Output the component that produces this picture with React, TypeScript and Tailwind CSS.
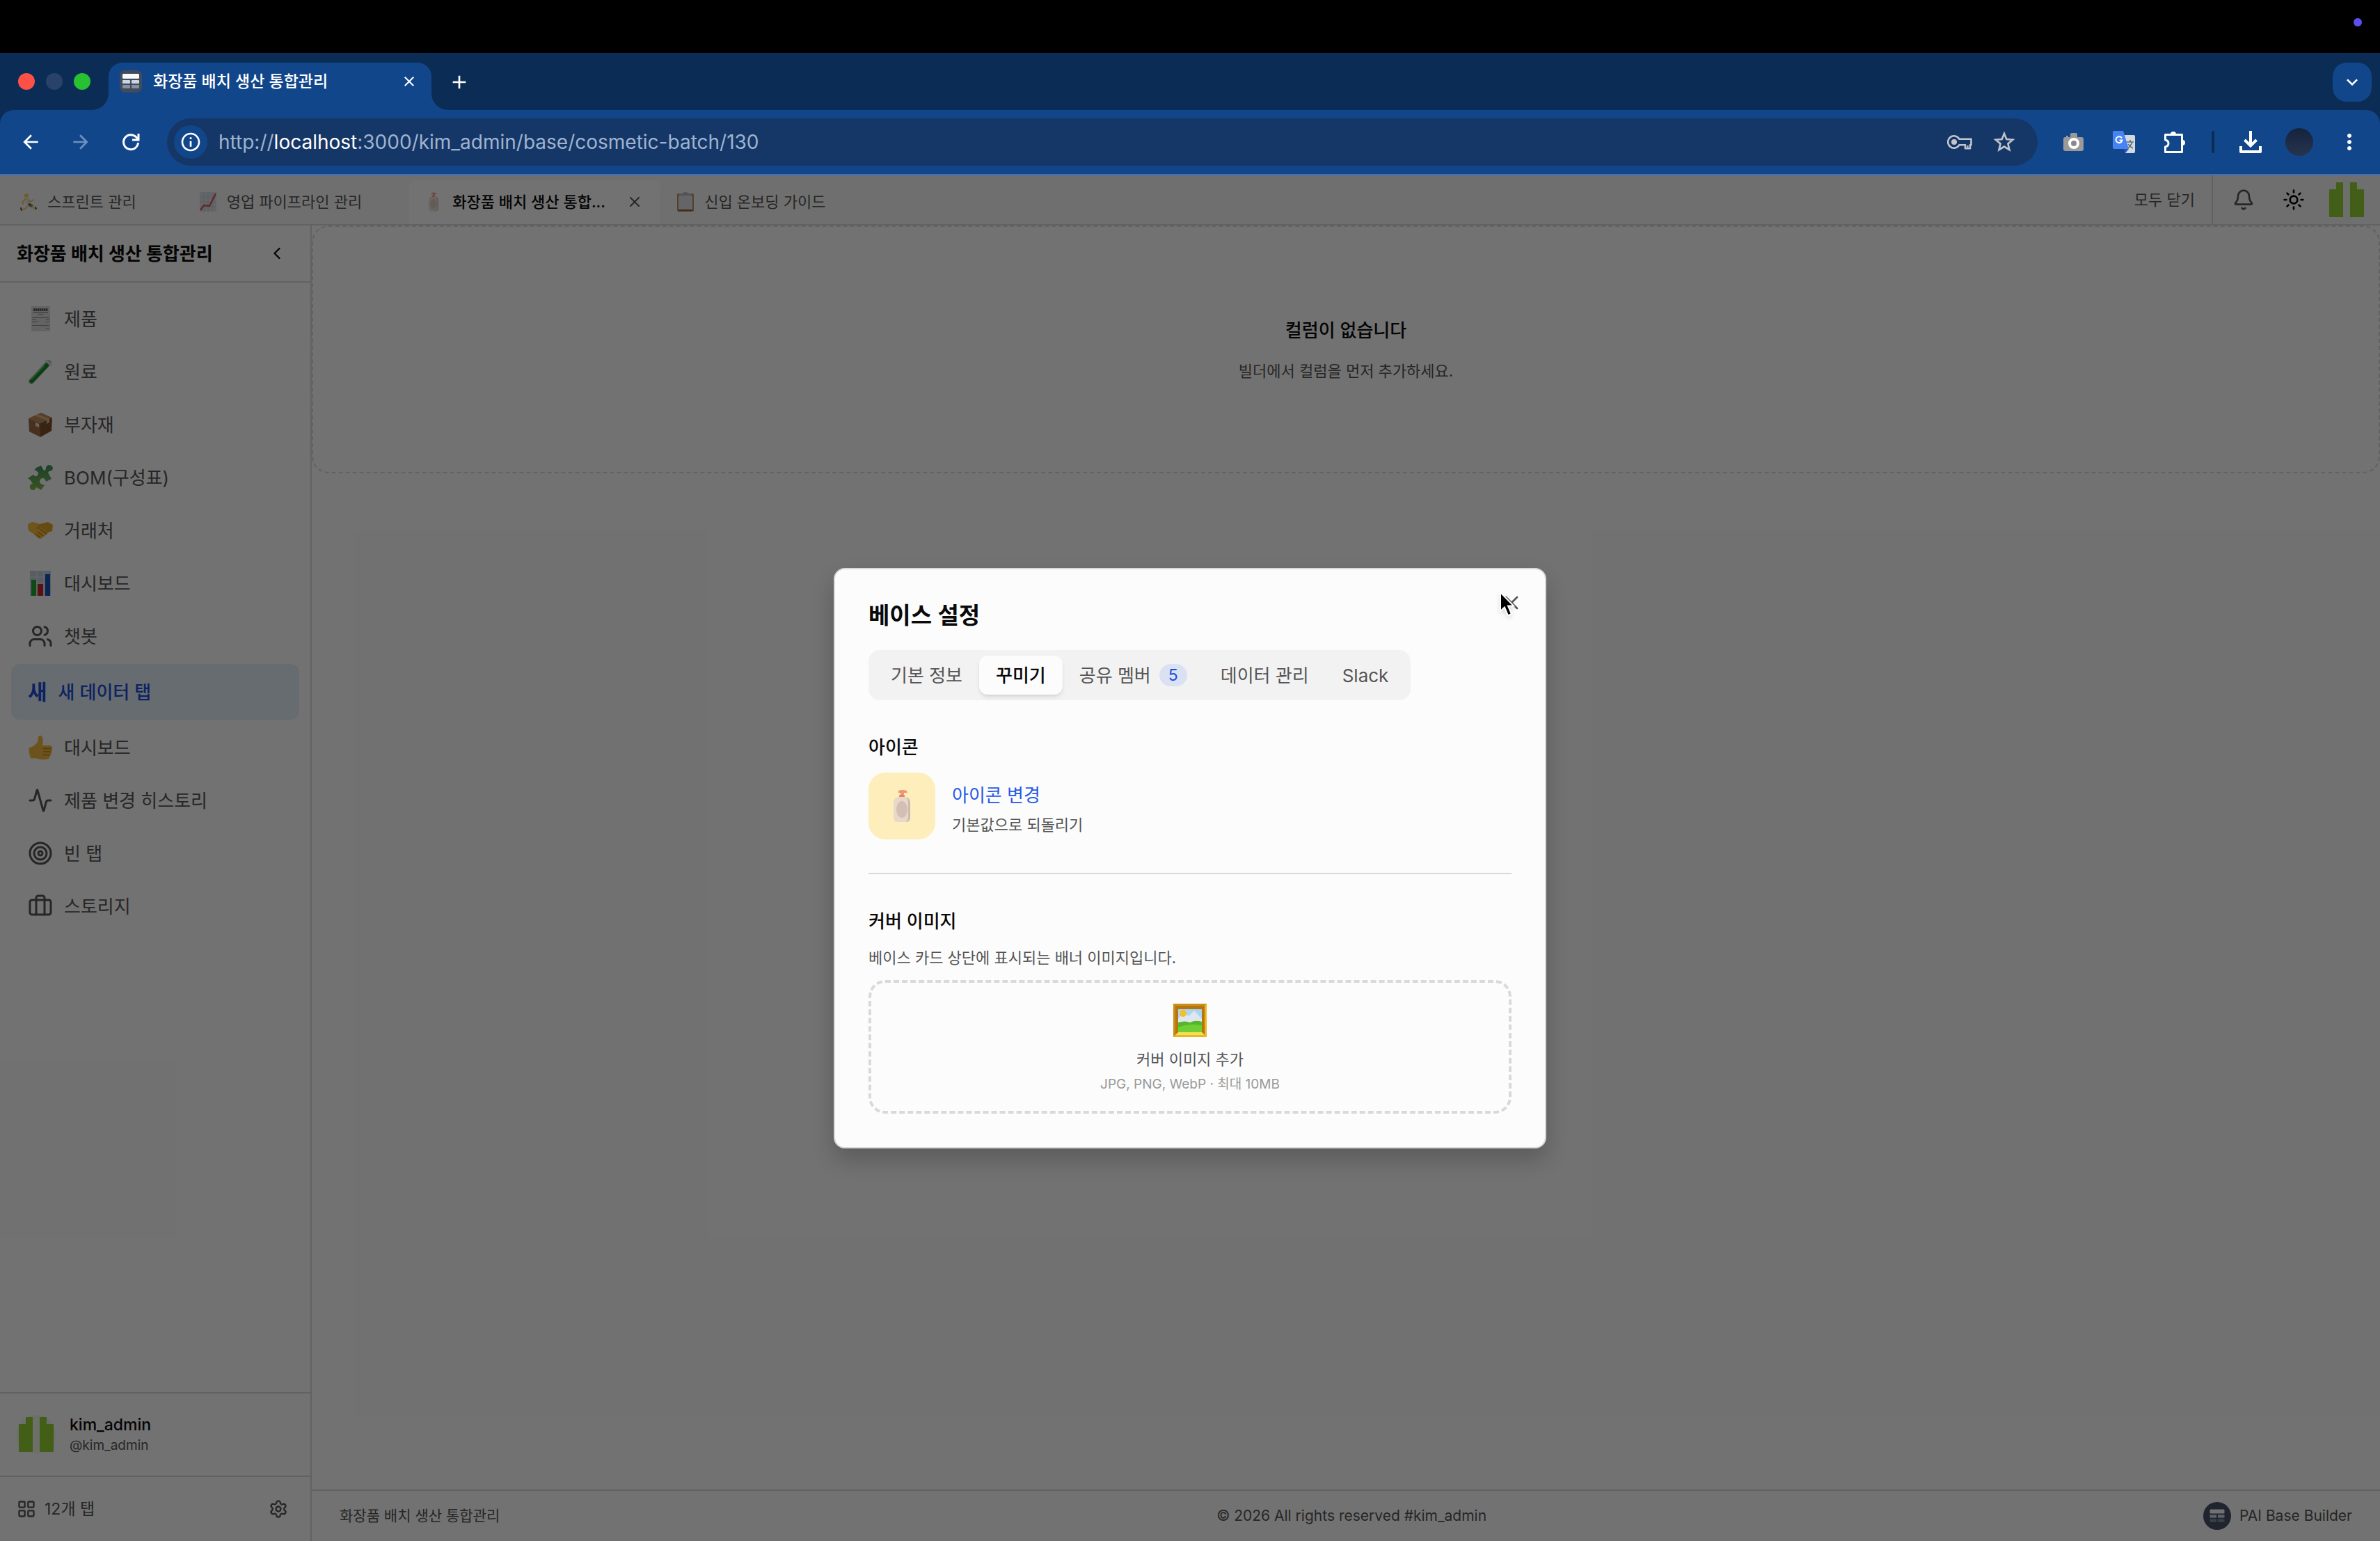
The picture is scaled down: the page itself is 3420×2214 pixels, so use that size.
import { ReactNode, useState } from "react";
import { Activity, Bell, Briefcase, ChevronLeft, LayoutGrid, Settings, Sun, Target, Users, X } from "lucide-react";
import { MdAdd, MdArrowBack, MdArrowForward, MdClose, MdInfoOutline, MdKeyboardArrowDown, MdMoreVert } from "react-icons/md";

interface BaseTab {
    emoji: ReactNode,
    label: string
}

interface SidebarItem {
    icon: ReactNode,
    label: string,
    active?: boolean
}

const AppLogo = ({ className }: { className: string }) => (
    <svg viewBox="0 0 32 32" className={className}>
        <rect x="4" y="5" width="24" height="7" rx="1.5" fill="#f8fafc" />
        <rect x="4" y="14" width="11" height="5" rx="1" fill="#cbd5e1" />
        <rect x="17" y="14" width="11" height="5" rx="1" fill="#cbd5e1" />
        <rect x="4" y="21" width="11" height="5" rx="1" fill="#8590a3" />
        <rect x="17" y="21" width="11" height="5" rx="1" fill="#8590a3" />
    </svg>
)

const Identicon = ({ className }: { className: string }) => (
    <svg viewBox="0 0 56 56" className={className}>
        <circle cx="28" cy="28" r="28" fill="#f1f7ea" />
        <path d="M3 13h10V3h10v50H3zM33 3h10v10h10v40H33z" fill="#93d133" />
    </svg>
)

const RunnerEmoji = ({ className }: { className: string }) => (
    <svg viewBox="0 0 28 28" className={className} fill="none" strokeLinecap="round" strokeLinejoin="round">
        <circle cx="11" cy="5" r="3" fill="#fbc02d" />
        <path d="M10 10l6 8" stroke="#dfe6ee" strokeWidth="6" />
        <path d="M10 10l-4 3v4M14 11l3 3 4-3" stroke="#fbc02d" strokeWidth="2" />
        <path d="M15 18l4 2" stroke="#37474f" strokeWidth="4" />
        <path d="M14 19l-5 5-4 1M19 20l3 4 3-1" stroke="#fbc02d" strokeWidth="2" />
        <path d="M3 23l1 3M24 22l1 2" stroke="#1f2a5a" strokeWidth="2" />
    </svg>
)

const ChartUpEmoji = ({ className }: { className: string }) => (
    <svg viewBox="0 0 28 28" className={className} fill="none">
        <rect x="2" y="0" width="24" height="28" fill="#d5dce4" />
        <path d="M8 0v28M14 0v28M20 0v28M2 7h24M2 14h24M2 21h24" stroke="#bcc8d4" />
        <path d="M3 26l5-7 8 1 9-18" stroke="#d32f2f" strokeWidth="2.4" />
    </svg>
)

const LotionEmoji = ({ className }: { className: string }) => (
    <svg viewBox="0 0 28 48" className={className}>
        <path d="M9 2q5-2 12 0l1 3h-5v4h-5V5H9z" fill="#ee9676" />
        <rect x="10" y="8" width="8" height="4" rx="1" fill="#e8845f" />
        <path d="M8 11h12q6 2 6 9v19q0 8-6 8H8q-6 0-6-8V20q0-7 6-9z" fill="#e8d8ca" />
        <path d="M20 11q6 2 6 9v19q0 8-6 8 3-3 3-9V20q0-7-3-9z" fill="#cfbbad" />
        <ellipse cx="14" cy="29" rx="8" ry="12" fill="#d3bfb3" />
    </svg>
)

const ClipboardEmoji = ({ className }: { className: string }) => (
    <svg viewBox="0 0 28 28" className={className}>
        <rect x="2" y="2" width="24" height="26" rx="2" fill="#a5743a" />
        <rect x="4" y="5" width="20" height="20" fill="#dcdce0" />
        <path d="M4 25h20v2H4z" fill="#6b3d16" />
        <path d="M5 2h5q0-2 4-2t4 2h5v3H5z" fill="#a7abb0" />
    </svg>
)

const ReceiptEmoji = () => (
    <svg viewBox="0 0 36 36" className="size-9">
        <path d="M5 0h27v36H5z" fill="#dcdcdc" />
        <path d="M8 5h21" stroke="#555" strokeWidth="3.5" strokeDasharray="2.500 0.500" />
        <path d="M8 8.500h21" stroke="#777" />
        <path d="M15 11.500h7M6 16.500h25M6 22.500h9M26 22.500h5M6 27.500h25M26 31.500h5M6 19.500h6M26 19.500h5" stroke="#8c8c8c" />
    </svg>
)

const TestTubeEmoji = () => (
    <svg viewBox="0 0 36 36" className="size-9" strokeLinecap="round">
        <path d="M5 32L30 5" stroke="#b4c2bc" strokeWidth="8" />
        <path d="M5.500 31.500L27 9" stroke="#168a2f" strokeWidth="6" />
        <path d="M5 29L23 10" stroke="#57c46a" strokeWidth="1.5" />
        <path d="M26 2l8 7" stroke="#dbe4e0" strokeWidth="2.5" />
    </svg>
)

const PackageEmoji = () => (
    <svg viewBox="0 0 36 36" className="size-9">
        <path d="M1 9L19 1l16 7-17 8z" fill="#c08a5a" />
        <path d="M1 9l17 7v20L2 28z" fill="#a36b3f" />
        <path d="M35 8l-17 8v20l16-9z" fill="#7e4e2b" />
        <path d="M10 5l17 7v5l4-2v-5L14 3z" fill="#d8b48c" />
        <path d="M11 15l5 2v5l-5-2z" fill="#dedede" />
    </svg>
)

const PuzzleEmoji = () => (
    <svg viewBox="0 0 36 36" className="size-9">
        <defs>
            <linearGradient id="puzzle" x1="0" y1="0" x2="0" y2="1">
                <stop offset="0" stopColor="#3f8f5f" />
                <stop offset="1" stopColor="#83b84a" />
            </linearGradient>
        </defs>
        <path
            d="M12 4l7-3 4 7q3 0 3-4 1-4 5-4 5 1 5 5-1 4-5 4-3 1-1 4l4 7-8 4q-1-5-5-5-4 1-4 5 1 4 4 4l3 1-5 7-7-4q-2 5-5 4-5-1-4-5 0-4 4-4-2-3-3-5L0 19l8-5q3 4 6 1 2-3 0-5-2-3-5-2z"
            fill="url(#puzzle)"
        />
    </svg>
)

const HandshakeEmoji = () => (
    <svg viewBox="0 0 36 36" className="size-9">
        <path d="M0 9l7-3 10 3 12-3 7 4-1 9-6 2-7 6q-3 4-7 2l-8-7-6-4z" fill="#e2a528" />
        <path d="M17 9l-6 6q3 3 8-1l10 8-6 5-8 2-9-8-5-4L0 9l7-3z" fill="#f3bd3c" />
        <path d="M17 16l10 7M14 20l8 6M11 23l7 5" stroke="#b27812" strokeWidth="1.2" fill="none" />
    </svg>
)

const BarChartEmoji = () => (
    <svg viewBox="0 0 36 36" className="size-9">
        <path d="M3 0h30v36H3z" fill="#c3cddb" />
        <path d="M13 0v36M23 0v36M3 9h30M3 18h30M3 27h30" stroke="#e4eaf2" />
        <path d="M5 13h7v23H5z" fill="#1fa52e" />
        <path d="M14 19h8v17h-8z" fill="#c62828" />
        <path d="M25 5h7v31h-7z" fill="#1456b8" />
    </svg>
)

const ThumbsUpEmoji = () => (
    <svg viewBox="0 0 36 36" className="size-9">
        <path d="M2 18q7-1 12-8 1-4 1-7 1-3 4-2 4 2 2 14l9 0q6 0 5 4 1 3-1 4 1 3-1 4 0 3-2 4 0 4-5 4-9 1-15-2-4 1-7 0-3-7-2-15z" fill="#f0b93c" />
        <path d="M22 19.500h11M22 24h11M22 28.500h10" stroke="#bf8317" strokeWidth="1.3" />
    </svg>
)

const FrameEmoji = () => (
    <svg viewBox="0 0 48 48" className="size-12">
        <path d="M0 0h48v48H0z" fill="#e8b923" />
        <path d="M0 0h48l-5 5H5v38l-5 5z" fill="#c98f17" />
        <path d="M3 3h42v42H3z" fill="#b8740f" />
        <path d="M3 45l4-4h34l4 4z" fill="#f7dc55" />
        <path d="M7 8h34v33H7z" fill="#a9d7f2" />
        <path d="M7 22l8-9 7 5 8-8 11 12v8H7z" fill="#dfe6ee" />
        <circle cx="14" cy="14" r="5" fill="#f5bf2c" />
        <path d="M7 27q10-3 17 0 8-4 17-1v15H7z" fill="#57b52c" />
        <path d="M7 34q14-6 34-3v10H7z" fill="#6fce33" />
    </svg>
)

const BASE_TABS: BaseTab[] = [
    { emoji: <RunnerEmoji className="size-7" />, label: "스프린트 관리" },
    { emoji: <ChartUpEmoji className="size-7" />, label: "영업 파이프라인 관리" },
    { emoji: <LotionEmoji className="size-7" />, label: "화장품 배치 생산 통합..." },
    { emoji: <ClipboardEmoji className="size-7" />, label: "신입 온보딩 가이드" }
]

const SIDEBAR_ITEMS: SidebarItem[] = [
    { icon: <ReceiptEmoji />, label: "제품" },
    { icon: <TestTubeEmoji />, label: "원료" },
    { icon: <PackageEmoji />, label: "부자재" },
    { icon: <PuzzleEmoji />, label: "BOM(구성표)" },
    { icon: <HandshakeEmoji />, label: "거래처" },
    { icon: <BarChartEmoji />, label: "대시보드" },
    { icon: <Users className="size-9" />, label: "챗봇" },
    { icon: <span className="text-[30px] font-bold">새</span>, label: "새 데이터 탭", active: true },
    { icon: <ThumbsUpEmoji />, label: "대시보드" },
    { icon: <Activity className="size-9" />, label: "제품 변경 히스토리" },
    { icon: <Target className="size-9" />, label: "빈 탭" },
    { icon: <Briefcase className="size-9" />, label: "스토리지" }
]

const SETTING_TABS = ["기본 정보", "꾸미기", "공유 멤버", "데이터 관리", "Slack"]

function BrowserChrome(){
    return(
        <div className="bg-[#0b2d55] text-white">
            <div className="flex h-[82px] items-end pl-[26px] pr-3">
                <div className="flex gap-4 pb-[29px] pr-[26px]">
                    <div className="size-6 rounded-full bg-[#fd5147]"></div>
                    <div className="size-6 rounded-full bg-[#28426a]"></div>
                    <div className="size-6 rounded-full bg-[#28c132]"></div>
                </div>
                <div className="relative h-[68px] w-[464px] rounded-t-[20px] bg-[#12468b] flex items-center pl-4 pr-5 pb-3.5">
                    <div className="absolute bottom-0 -left-6 size-6 bg-[#12468b]"><div className="size-6 rounded-br-full bg-[#0b2d55]"></div></div>
                    <div className="absolute bottom-0 -right-6 size-6 bg-[#12468b]"><div className="size-6 rounded-bl-full bg-[#0b2d55]"></div></div>
                    <AppLogo className="size-8 rounded-lg bg-[#414b5c]" />
                    <div className="flex-1 pl-4 text-[23px] font-medium">화장품 배치 생산 통합관리</div>
                    <button aria-label="탭 닫기"><MdClose className="size-6" /></button>
                </div>
                <button aria-label="새 탭" className="pb-6 pl-6"><MdAdd className="size-8" /></button>
                <button aria-label="탭 검색" className="mb-3 ml-auto size-14 rounded-[20px] bg-[#12468b] flex items-center justify-center">
                    <MdKeyboardArrowDown className="size-8" />
                </button>
            </div>
            <div className="flex h-[94px] items-center rounded-t-[20px] border-b-2 border-[#3f70b0] bg-[#12468b] pl-7 pr-[26px]">
                <div className="flex gap-10 pr-9">
                    <button aria-label="뒤로"><MdArrowBack className="size-8" /></button>
                    <button aria-label="앞으로" className="text-[#6f90bd]"><MdArrowForward className="size-8" /></button>
                    <button aria-label="새로고침">
                        <svg viewBox="0 0 32 32" className="size-8" fill="none" stroke="currentColor" strokeWidth="3">
                            <path d="M26.500 17a10.500 10.500 0 1 1-3-8.200l3 3" />
                            <path d="M27 4v9h-9" />
                        </svg>
                    </button>
                </div>
                <div className="flex h-[68px] flex-1 items-center rounded-full bg-[#153767] pl-2.5 pr-8">
                    <button aria-label="사이트 정보" className="size-12 rounded-full bg-[#12468b] flex items-center justify-center">
                        <MdInfoOutline className="size-8" />
                    </button>
                    <div role="textbox" aria-label="주소창" className="flex-1 pl-4 text-[28px] text-[#9fb3cf]">
                        http://<span className="text-white">localhost</span>:3000/kim_admin/base/cosmetic-batch/130
                    </div>
                    <div className="flex items-center gap-[30px] text-[#c1c5cc]">
                        <button aria-label="비밀번호">
                            <svg viewBox="0 0 36 28" className="h-7 w-9" fill="none" stroke="currentColor" strokeWidth="2.600" strokeLinejoin="round">
                                <path d="M17.500 9.800A8.700 8.700 0 1 0 17.500 18.200H26v5h7v-5h1.500V9.800z" />
                                <path d="M29.500 19v4" strokeWidth="2" />
                                <circle cx="10" cy="14" r="4" fill="currentColor" stroke="none" />
                            </svg>
                        </button>
                        <button aria-label="북마크">
                            <svg viewBox="0 0 32 32" className="size-8" fill="none" stroke="currentColor" strokeWidth="2.600">
                                <path d="M16 4l3.300 8 9 .7-6.900 5.800 2.100 8.700L16 22.600l-7.500 4.600 2.100-8.700-6.900-5.800 9-.7z" />
                            </svg>
                        </button>
                    </div>
                </div>
                <div className="flex items-center gap-10 pl-9">
                    <button aria-label="스크린샷">
                        <svg viewBox="0 0 32 32" className="size-8">
                            <path d="M4 9h1V7h3v2h3V5q0-2 2-2h6q2 0 2 2v4h6q3 0 3 3v14q0 3-3 3H4q-3 0-3-3V12q0-3 3-3z" fill="#9a9a9a" />
                            <circle cx="16" cy="18" r="6" fill="#8a8a8a" stroke="#fff" strokeWidth="4" />
                        </svg>
                    </button>
                    <button aria-label="번역">
                        <svg viewBox="0 0 32 32" className="size-8">
                            <path d="M16 6h14q2 0 2 2v22q0 2-2 2H18z" fill="#d5d8dc" />
                            <path d="M20 16h10M25 13v3M28 16q-2 6-7 9M22 19q3 4 7 6" stroke="#51707d" strokeWidth="1.600" fill="none" />
                            <path d="M16 26h7l-5 6z" fill="#3a4db5" />
                            <path d="M2 0h13l8 26H2q-2 0-2-2V2q0-2 2-2z" fill="#4683f3" />
                            <path d="M13 10.500a4.500 4.500 0 1 0 .5 3H9.500" stroke="#fff" strokeWidth="2" fill="none" />
                        </svg>
                    </button>
                    <button aria-label="확장 프로그램">
                        <svg viewBox="0 0 34 34" className="size-[34px]" fill="none" stroke="currentColor" strokeWidth="3" strokeLinejoin="round">
                            <path d="M3.500 6.500h24v25h-24v-7.500q4.500-1 4.500-5t-4.500-5z" />
                            <path d="M11 6a4 4 0 0 1 8 0zM28 14a4 4 0 0 1 0 8z" fill="currentColor" stroke="none" />
                        </svg>
                    </button>
                </div>
                <div className="mx-9 h-8 w-1 rounded-full bg-[#0b2d55]"></div>
                <div className="flex items-center gap-[34px]">
                    <button aria-label="다운로드">
                        <svg viewBox="0 0 32 32" className="size-8" fill="none" stroke="currentColor" strokeWidth="4">
                            <path d="M16 0v22M7.500 13l8.500 8.500 8.500-8.500" />
                            <path d="M2 22v8h28v-8" strokeLinejoin="round" />
                        </svg>
                    </button>
                    <button aria-label="프로필" className="size-10 rounded-full bg-linear-to-b from-[#16233f] to-[#26344d]"></button>
                    <button aria-label="메뉴"><MdMoreVert className="size-9" /></button>
                </div>
            </div>
        </div>
    )
}

function BaseHeader(){
    const activeTab = 2

    return(
        <header className="flex h-[72px] items-stretch border-b-2 border-[#d9d9d9] bg-[#f7f7f7] pl-1.5">
            <div className="flex flex-1 gap-0.5 pt-1.5">
                {BASE_TABS.map((tab, index) => (
                    <div key={index} className={`flex items-center rounded-t-xl px-5 ${index === activeTab ? "min-w-[360px] bg-[#fcfcfc] text-[#0a0a0a] font-medium" : "text-[#555]"}`}>
                        <div className="w-[30px] flex justify-center opacity-80">{tab.emoji}</div>
                        <div className="ml-3 flex-1 text-[22px] leading-8">{tab.label}</div>
                        <button aria-label={`${tab.label} 닫기`} className={`ml-3.5 size-8 flex items-center justify-center text-[#555] ${index === activeTab ? "" : "invisible"}`}>
                            <X className="size-6" />
                        </button>
                    </div>
                ))}
            </div>
            <button className="px-6 text-[22px] text-[#555]">모두 닫기</button>
            <div className="flex items-center gap-5 border-l-2 border-[#d9d9d9] pl-7 pr-5">
                <button aria-label="알림" className="text-[#555]"><Bell className="size-8" /></button>
                <button aria-label="테마" className="pl-5 pr-3"><Sun className="size-8" /></button>
                <button aria-label="내 계정"><Identicon className="size-14" /></button>
            </div>
        </header>
    )
}

function Sidebar(){
    return(
        <aside className="flex w-[448px] shrink-0 flex-col border-r-2 border-[#d9d9d9] text-[26px] text-[#555]">
            <div className="flex h-[82px] items-center justify-between border-b-2 border-[#d9d9d9] pl-6 pr-[34px] text-[#0a0a0a]">
                <h1 className="font-bold">화장품 배치 생산 통합관리</h1>
                <button aria-label="사이드바 접기"><ChevronLeft className="size-7" /></button>
            </div>
            <nav className="flex flex-1 flex-col gap-1 p-4">
                {SIDEBAR_ITEMS.map((item, index) => (
                    <a key={index} href="#" className={`flex items-center gap-4 rounded-xl px-6 ${item.active ? "h-20 bg-[#e5f0f9] font-medium text-[#1d4ed8]" : "h-[72px]"}`}>
                        {item.icon}
                        <span>{item.label}</span>
                    </a>
                ))}
            </nav>
            <div className="flex h-[120px] items-center gap-5 border-t-2 border-[#d9d9d9] pl-6">
                <Identicon className="size-14" />
                <div>
                    <div className="text-[23px] leading-8 font-medium text-[#0a0a0a]">kim_admin</div>
                    <div className="text-[19px] leading-7">@kim_admin</div>
                </div>
            </div>
            <div className="flex h-[94px] items-center border-t-2 border-[#d9d9d9] pl-6 pr-8">
                <LayoutGrid className="size-7" />
                <span className="flex-1 pl-3 text-[23px]">12개 탭</span>
                <button aria-label="설정"><Settings className="size-7" /></button>
            </div>
        </aside>
    )
}

function BaseSettingModal(){
    const [activeTab, setActiveTab] = useState("꾸미기")

    return(
        <div role="dialog" aria-label="베이스 설정" className="relative w-[1024px] rounded-2xl border-2 border-[#d9d9d9] bg-[#fcfcfc] p-12 text-[#0a0a0a] shadow-[0_16px_32px_rgba(0,0,0,0.2)]">
            <h2 className="text-[33px] leading-9 font-semibold">베이스 설정</h2>
            <button aria-label="닫기" className="absolute top-8 right-8 text-[#555]"><X className="size-8" /></button>
            <svg viewBox="0 0 26 40" className="absolute top-8 right-10 h-10 w-[26px] drop-shadow-md">
                <path d="M2 1v27l6-5.500 5 12 5-2.500-5-11.500h8z" fill="#000" stroke="#fff" strokeWidth="2" />
            </svg>

            <div role="tablist" className="mt-8 inline-flex rounded-2xl bg-[#f2f2f2] p-2 align-top text-[26px]">
                {SETTING_TABS.map((tab) => (
                    <button key={tab} role="tab" aria-selected={tab === activeTab} onClick={() => setActiveTab(tab)} className={`flex h-14 items-center gap-3 rounded-xl px-6 ${tab === activeTab ? "bg-[#fcfcfc] font-medium text-[#0a0a0a] shadow-md" : "text-[#555]"}`}>
                        {tab}
                        {tab === "공유 멤버" && <span className="h-8 w-10 rounded-full bg-[#dae1f3] text-center text-[23px] leading-8 text-[#1d4ed8]">5</span>}
                    </button>
                ))}
            </div>

            <h3 className="mt-12 text-[26px] leading-10 font-medium">아이콘</h3>
            <div className="mt-4 flex items-center gap-6 border-b-2 border-[#d9d9d9] pb-12">
                <div className="size-24 rounded-3xl bg-[#fdeebb] flex items-center justify-center">
                    <LotionEmoji className="h-12 w-7" />
                </div>
                <div className="flex flex-col items-start gap-1.5 pt-2">
                    <button className="text-[26px] leading-10 text-[#2459e8]">아이콘 변경</button>
                    <button className="text-[22px] leading-8 text-[#555]">기본값으로 되돌리기</button>
                </div>
            </div>

            <h3 className="mt-12 text-[26px] leading-10 font-medium">커버 이미지</h3>
            <p className="mt-4 text-[22px] leading-8 text-[#555]">베이스 카드 상단에 표시되는 배너 이미지입니다.</p>
            <button className="mt-4 flex w-full flex-col items-center rounded-3xl border-4 border-dashed border-[#d9d9d9] p-6">
                <span className="h-[60px] flex items-center"><FrameEmoji /></span>
                <span className="mt-2.5 text-[22px] leading-8 text-[#555]">커버 이미지 추가</span>
                <span className="mt-1.5 text-[19px] leading-7 text-[#999]">JPG, PNG, WebP · 최대 10MB</span>
            </button>
        </div>
    )
}

export default function App(){
    return(
        <div className="flex min-h-screen flex-col font-[Inter,'Noto_Sans_CJK_KR',sans-serif]">
            <div className="flex h-[76px] items-center justify-end bg-black pr-[26px] pb-3">
                <div className="size-3 rounded-full bg-[#5a50ee]"></div>
            </div>
            <BrowserChrome />
            <div className="relative flex flex-1 flex-col bg-[#fcfcfc]">
                <BaseHeader />
                <div className="flex flex-1">
                    <Sidebar />
                    <div className="flex flex-1 flex-col">
                        <main className="flex-1">
                            <div className="flex h-[356px] flex-col items-center justify-center gap-[22px] rounded-3xl border-2 border-dashed border-[#d9d9d9]">
                                <h2 className="text-[26px] leading-10 font-medium text-[#0a0a0a]">컬럼이 없습니다</h2>
                                <p className="text-[22px] leading-8 text-[#555]">빌더에서 컬럼을 먼저 추가하세요.</p>
                            </div>
                        </main>
                        <footer className="flex h-[74px] items-center justify-between border-t-2 border-[#d9d9d9] px-10 text-[21px] text-[#555]">
                            <div>화장품 배치 생산 통합관리</div>
                            <div>© 2026 All rights reserved #kim_admin</div>
                            <div className="flex items-center gap-3">
                                <AppLogo className="size-10 rounded-full bg-[#475069] p-1.5" />
                                PAI Base Builder
                            </div>
                        </footer>
                    </div>
                </div>
                <div className="absolute inset-0 flex items-center justify-center bg-black/55">
                    <BaseSettingModal />
                </div>
            </div>
        </div>
    )
}
